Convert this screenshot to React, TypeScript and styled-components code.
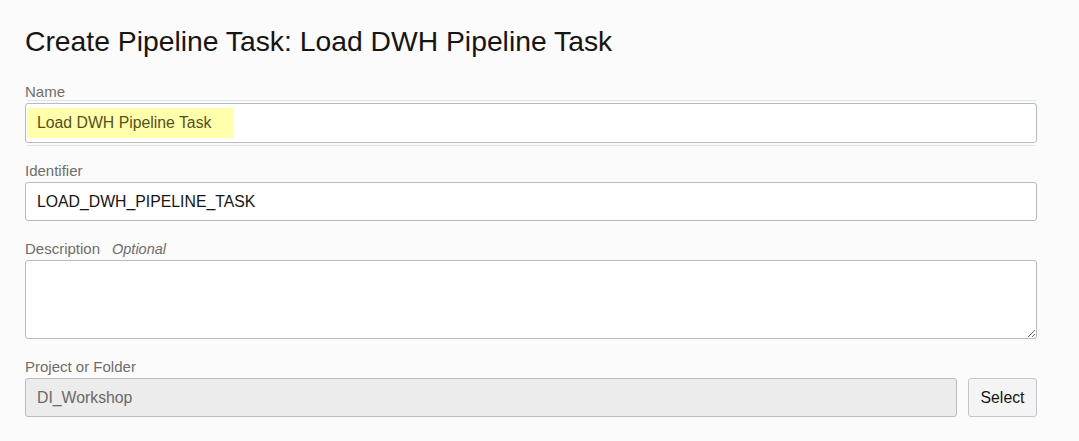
import React from "react";
import styled, { createGlobalStyle } from "styled-components";

const GlobalStyle = createGlobalStyle`
  html, body {
    margin: 0;
    padding: 0;
    background: #fbfbfb;
  }
  body {
    font-family: "Liberation Sans", Arial, sans-serif;
    color: #161513;
  }
`;

const Page = styled.main`
  width: 1012px;
  padding: 25px 0 0 25px;
  display: flex;
  flex-direction: column;
`;

const Title = styled.h1`
  margin: 0 0 26px 0;
  font-size: 28.3px;
  line-height: 32px;
  font-weight: 400;
  color: #161513;
`;

const Form = styled.form`
  display: flex;
  flex-direction: column;
  gap: 19px;
`;

const Field = styled.div`
  display: flex;
  flex-direction: column;
  gap: 2px;
`;

const Label = styled.label`
  font-size: 15px;
  line-height: 18px;
  color: #6f6d6b;
  display: flex;
  align-items: baseline;
`;

const OptionalTag = styled.span`
  font-style: italic;
  margin-left: 12px;
  font-size: 14.5px;
`;

const FocusFrame = styled.div`
  position: relative;
  &::before,
  &::after {
    content: "";
    position: absolute;
    left: 2px;
    right: 1px;
    height: 1px;
    background: #dbe5f3;
  }
  &::before {
    top: -3px;
  }
  &::after {
    bottom: -3px;
  }
`;

const boxBase = `
  box-sizing: border-box;
  width: 100%;
  border: 1px solid #b6bac1;
  border-radius: 3px;
  background: #ffffff;
  font-family: "Liberation Sans", Arial, sans-serif;
  font-size: 15.8px;
  color: #161513;
  outline: none;
  margin: 0;
`;

const NameBox = styled.div`
  ${boxBase};
  height: 40px;
  display: flex;
  align-items: center;
  padding: 0 0 0 1px;
`;

const Mark = styled.span`
  background: #ffffac;
  color: #55511a;
  height: 30px;
  line-height: 30px;
  padding: 0 22px 0 10px;
`;

const TextInput = styled.input<{ $disabled?: boolean }>`
  ${boxBase};
  height: 39px;
  padding: 0 11px;
  background: ${(p) => (p.$disabled ? "#ececec" : "#ffffff")};
  color: ${(p) => (p.$disabled ? "#6b6967" : "#161513")};
`;

const TextArea = styled.textarea`
  ${boxBase};
  height: 79px;
  padding: 8px 11px;
  display: block;
  resize: vertical;
`;

const Row = styled.div`
  display: flex;
  gap: 11px;
`;

const Grow = styled.div`
  flex: 1;
  display: flex;
`;

const Button = styled.button`
  box-sizing: border-box;
  width: 69px;
  height: 39px;
  border: 1px solid #c2c5ca;
  border-radius: 3px;
  background: #f4f4f4;
  font-family: "Liberation Sans", Arial, sans-serif;
  font-size: 15.8px;
  color: #161513;
  padding: 0;
  cursor: pointer;
`;

export default function App() {
  return (
    <>
      <GlobalStyle />
      <Page>
        <Title>Create Pipeline Task: Load DWH Pipeline Task</Title>
        <Form onSubmit={(e) => e.preventDefault()}>
          <Field>
            <Label>Name</Label>
            <FocusFrame>
              <NameBox role="textbox">
                <Mark>Load DWH Pipeline Task</Mark>
              </NameBox>
            </FocusFrame>
          </Field>
          <Field>
            <Label htmlFor="identifier">Identifier</Label>
            <TextInput id="identifier" defaultValue="LOAD_DWH_PIPELINE_TASK" />
          </Field>
          <Field>
            <Label htmlFor="description">
              Description<OptionalTag>Optional</OptionalTag>
            </Label>
            <TextArea id="description" />
          </Field>
          <Field>
            <Label htmlFor="folder">Project or Folder</Label>
            <Row>
              <Grow>
                <TextInput id="folder" $disabled readOnly defaultValue="DI_Workshop" />
              </Grow>
              <Button type="button">Select</Button>
            </Row>
          </Field>
        </Form>
      </Page>
    </>
  );
}
